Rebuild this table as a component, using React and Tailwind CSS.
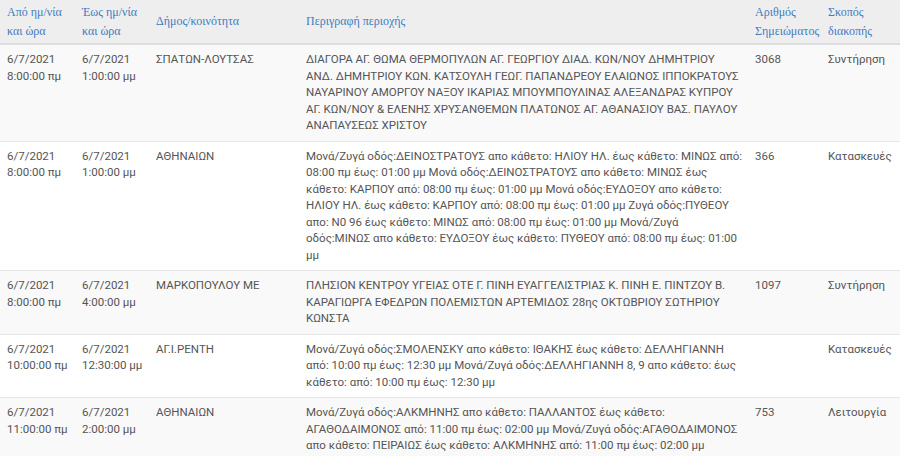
const HEADERS = [
  ['Από ημ/νία', 'και ώρα'],
  ['Έως ημ/νία', 'και ώρα'],
  ['Δήμος/κοινότητα'],
  ['Περιγραφή περιοχής'],
  ['Αριθμός', 'Σημειώματος'],
  ['Σκοπός', 'διακοπής'],
];

const ROWS = [
  {
    from: ['6/7/2021', '8:00:00 πμ'],
    to: ['6/7/2021', '1:00:00 μμ'],
    area: 'ΣΠΑΤΩΝ-ΛΟΥΤΣΑΣ',
    desc: [
      'ΔΙΑΓΟΡΑ ΑΓ. ΘΩΜΑ ΘΕΡΜΟΠΥΛΩΝ ΑΓ. ΓΕΩΡΓΙΟΥ ΔΙΑΔ. ΚΩΝ/ΝΟΥ ΔΗΜΗΤΡΙΟΥ',
      'ΑΝΔ. ΔΗΜΗΤΡΙΟΥ ΚΩΝ. ΚΑΤΣΟΥΛΗ ΓΕΩΓ. ΠΑΠΑΝΔΡΕΟΥ ΕΛΑΙΩΝΟΣ ΙΠΠΟΚΡΑΤΟΥΣ',
      'ΝΑΥΑΡΙΝΟΥ ΑΜΟΡΓΟΥ ΝΑΞΟΥ ΙΚΑΡΙΑΣ ΜΠΟΥΜΠΟΥΛΙΝΑΣ ΑΛΕΞΑΝΔΡΑΣ ΚΥΠΡΟΥ',
      'ΑΓ. ΚΩΝ/ΝΟΥ & ΕΛΕΝΗΣ ΧΡΥΣΑΝΘΕΜΩΝ ΠΛΑΤΩΝΟΣ ΑΓ. ΑΘΑΝΑΣΙΟΥ ΒΑΣ. ΠΑΥΛΟΥ',
      'ΑΝΑΠΑΥΣΕΩΣ ΧΡΙΣΤΟΥ',
    ],
    num: '3068',
    purpose: 'Συντήρηση',
  },
  {
    from: ['6/7/2021', '8:00:00 πμ'],
    to: ['6/7/2021', '1:00:00 μμ'],
    area: 'ΑΘΗΝΑΙΩΝ',
    desc: [
      'Μονά/Ζυγά οδός:ΔΕΙΝΟΣΤΡΑΤΟΥΣ απο κάθετο: ΗΛΙΟΥ ΗΛ. έως κάθετο: ΜΙΝΩΣ από:',
      '08:00 πμ έως: 01:00 μμ Μονά οδός:ΔΕΙΝΟΣΤΡΑΤΟΥΣ απο κάθετο: ΜΙΝΩΣ έως',
      'κάθετο: ΚΑΡΠΟΥ από: 08:00 πμ έως: 01:00 μμ Μονά οδός:ΕΥΔΟΞΟΥ απο κάθετο:',
      'ΗΛΙΟΥ ΗΛ. έως κάθετο: ΚΑΡΠΟΥ από: 08:00 πμ έως: 01:00 μμ Ζυγά οδός:ΠΥΘΕΟΥ',
      'απο: Ν0 96 έως κάθετο: ΜΙΝΩΣ από: 08:00 πμ έως: 01:00 μμ Μονά/Ζυγά',
      'οδός:ΜΙΝΩΣ απο κάθετο: ΕΥΔΟΞΟΥ έως κάθετο: ΠΥΘΕΟΥ από: 08:00 πμ έως: 01:00',
      'μμ',
    ],
    num: '366',
    purpose: 'Κατασκευές',
  },
  {
    from: ['6/7/2021', '8:00:00 πμ'],
    to: ['6/7/2021', '4:00:00 μμ'],
    area: 'ΜΑΡΚΟΠΟΥΛΟΥ ΜΕ',
    desc: [
      'ΠΛΗΣΙΟΝ ΚΕΝΤΡΟΥ ΥΓΕΙΑΣ ΟΤΕ Γ. ΠΙΝΗ ΕΥΑΓΓΕΛΙΣΤΡΙΑΣ Κ. ΠΙΝΗ Ε. ΠΙΝΤΖΟΥ Β.',
      'ΚΑΡΑΓΙΩΡΓΑ ΕΦΕΔΡΩΝ ΠΟΛΕΜΙΣΤΩΝ ΑΡΤΕΜΙΔΟΣ 28ης ΟΚΤΩΒΡΙΟΥ ΣΩΤΗΡΙΟΥ',
      'ΚΩΝΣΤΑ',
    ],
    num: '1097',
    purpose: 'Συντήρηση',
  },
  {
    from: ['6/7/2021', '10:00:00 πμ'],
    to: ['6/7/2021', '12:30:00 μμ'],
    area: 'ΑΓ.Ι.ΡΕΝΤΗ',
    desc: [
      'Μονά/Ζυγά οδός:ΣΜΟΛΕΝΣΚΥ απο κάθετο: ΙΘΑΚΗΣ έως κάθετο: ΔΕΛΛΗΓΙΑΝΝΗ',
      'από: 10:00 πμ έως: 12:30 μμ Μονά/Ζυγά οδός:ΔΕΛΛΗΓΙΑΝΝΗ 8, 9 απο κάθετο: έως',
      'κάθετο: από: 10:00 πμ έως: 12:30 μμ',
    ],
    num: '',
    purpose: 'Κατασκευές',
  },
  {
    from: ['6/7/2021', '11:00:00 πμ'],
    to: ['6/7/2021', '2:00:00 μμ'],
    area: 'ΑΘΗΝΑΙΩΝ',
    desc: [
      'Μονά/Ζυγά οδός:ΑΛΚΜΗΝΗΣ απο κάθετο: ΠΑΛΛΑΝΤΟΣ έως κάθετο:',
      'ΑΓΑΘΟΔΑΙΜΟΝΟΣ από: 11:00 πμ έως: 02:00 μμ Μονά/Ζυγά οδός:ΑΓΑΘΟΔΑΙΜΟΝΟΣ',
      'απο κάθετο: ΠΕΙΡΑΙΩΣ έως κάθετο: ΑΛΚΜΗΝΗΣ από: 11:00 πμ έως: 02:00 μμ',
    ],
    num: '753',
    purpose: 'Λειτουργία',
  },
];

function Lines({ lines }) {
  return lines.map((line, i) => (
    <span key={i} className="block whitespace-nowrap">
      {line}
    </span>
  ));
}

const cell = 'px-[7px] pt-[6px] pb-[7px] align-top';

export default function App() {
  return (
    <div className="w-[900px] h-[456px] overflow-hidden bg-white">
      <table className="w-full table-fixed border-collapse font-['Roboto',sans-serif] text-[11.5px] leading-[16.5px] text-[#555]">
        <colgroup>
          <col className="w-[75px]" />
          <col className="w-[74px]" />
          <col className="w-[150px]" />
          <col className="w-[449px]" />
          <col className="w-[73px]" />
          <col />
        </colgroup>
        <thead>
          <tr className="bg-[#eeeeee] border-b-2 border-[#dddddd]">
            {HEADERS.map((h, i) => (
              <th
                key={i}
                className="h-[44px] px-[7px] align-middle text-left font-normal font-['Liberation_Serif',serif] text-[12px] leading-[19px] text-[#3f7cbf]"
              >
                <Lines lines={h} />
              </th>
            ))}
          </tr>
        </thead>
        <tbody>
          {ROWS.map((r, i) => (
            <tr
              key={i}
              className={`border-t border-[#e6e6e6] ${i % 2 === 0 ? 'bg-[#f9f9f9]' : 'bg-white'}`}
            >
              <td className={cell}>
                <Lines lines={r.from} />
              </td>
              <td className={cell}>
                <Lines lines={r.to} />
              </td>
              <td className={cell}>{r.area}</td>
              <td className={cell}>
                <Lines lines={r.desc} />
              </td>
              <td className={cell}>{r.num}</td>
              <td className={cell}>{r.purpose}</td>
            </tr>
          ))}
        </tbody>
      </table>
    </div>
  );
}
